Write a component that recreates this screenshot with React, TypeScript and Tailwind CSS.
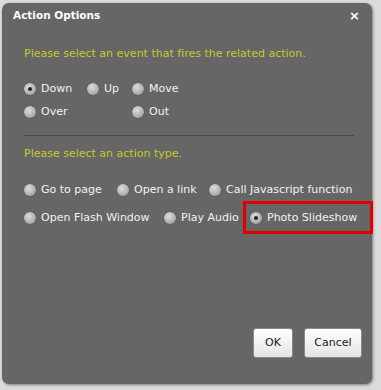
import React from 'react';

function Radio({ label, checked = false }: { label: string; checked?: boolean }) {
    return (
        <div className="flex items-center whitespace-nowrap">
            <span className="relative shrink-0 w-[12px] h-[12px] rounded-full bg-[radial-gradient(circle_at_40%_35%,#dcdcdc,#b4b4b4_55%,#8c8c8c)] shadow-[0_0_1px_rgba(0,0,0,0.5)] flex items-center justify-center">
                {checked && <span className="w-[4px] h-[4px] rounded-full bg-[#222]" />}
            </span>
            <span className="ml-[5px] text-[#f2f2f2]">{label}</span>
        </div>
    );
}

export default function App() {
    return (
        <div className="w-[381px] h-[390px] bg-[#dcdcdc] overflow-hidden pt-[3px] pl-[2px]" style={{ fontFamily: '"DejaVu Sans", Verdana, sans-serif' }}>
            <div className="w-[370px] h-[381px] rounded-[7px] bg-[#666666] shadow-[1px_1px_3px_rgba(0,0,0,0.45)] flex flex-col text-[11px] leading-[16px]">
                {/* title */}
                <div className="h-[24px] flex items-center justify-between pl-[11px] pr-[12px]">
                    <span className="text-white font-bold text-[10.5px]">Action Options</span>
                    <span className="text-white font-bold text-[13px] leading-none">×</span>
                </div>

                <div className="pl-[22px] pr-[20px] flex flex-col">
                    <div className="mt-[19px] text-[#c6c92c]">Please select an event that fires the related action.</div>

                    <div className="mt-[18px] h-[18px] flex items-center">
                        <div className="w-[63px] shrink-0"><Radio label="Down" checked /></div>
                        <div className="w-[45px] shrink-0"><Radio label="Up" /></div>
                        <Radio label="Move" />
                    </div>
                    <div className="mt-[5px] h-[18px] flex items-center">
                        <div className="w-[108px] shrink-0"><Radio label="Over" /></div>
                        <Radio label="Out" />
                    </div>

                    <div className="mt-[14px] mr-[-2px] h-px bg-[#464646]" />

                    <div className="mt-[10px] text-[#c6c92c]">Please select an action type.</div>

                    <div className="mt-[19px] h-[18px] flex items-center">
                        <div className="w-[93px] shrink-0"><Radio label="Go to page" /></div>
                        <div className="w-[92px] shrink-0"><Radio label="Open a link" /></div>
                        <Radio label="Call Javascript function" />
                    </div>
                    <div className="mt-[2px] h-[33px] flex items-center">
                        <div className="w-[140px] shrink-0"><Radio label="Open Flash Window" /></div>
                        <div className="w-[79px] shrink-0"><Radio label="Play Audio" /></div>
                        <div className="h-[33px] w-[130px] shrink-0 border-[3px] border-[#e00000] pl-[4px] flex items-center">
                            <Radio label="Photo Slideshow" checked />
                        </div>
                    </div>
                </div>

                <div className="mt-auto mb-[26px] pr-[10px] flex justify-end gap-[11px]">
                    <button className="w-[40px] h-[30px] rounded-[3px] border border-[#8a8a8a] bg-[linear-gradient(#ffffff,#e4e4e4)] text-[#1a1a1a] text-[11px]">OK</button>
                    <button className="w-[58px] h-[30px] rounded-[3px] border border-[#8a8a8a] bg-[linear-gradient(#ffffff,#e4e4e4)] text-[#1a1a1a] text-[11px]">Cancel</button>
                </div>
            </div>
        </div>
    );
}
